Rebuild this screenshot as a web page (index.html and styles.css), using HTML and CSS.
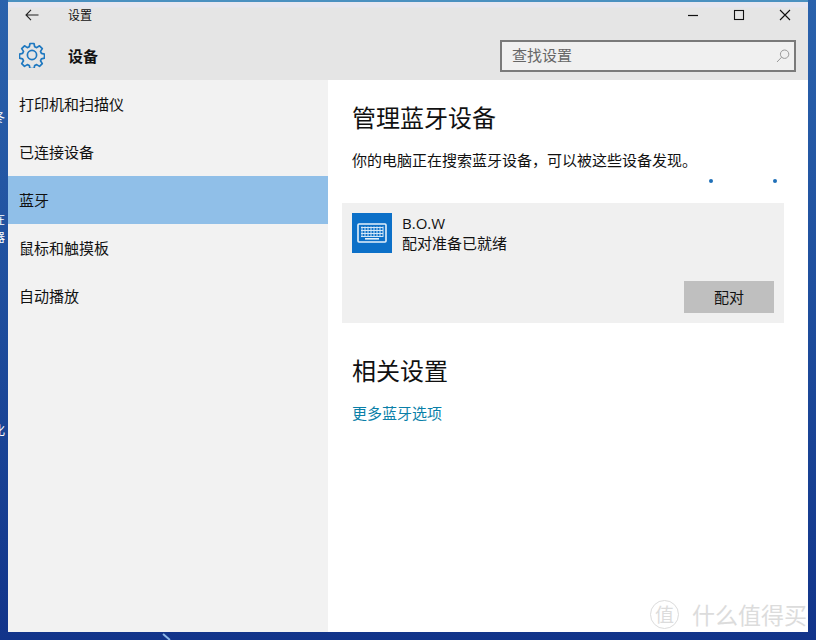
FILE: index.html
```html
<!DOCTYPE html>
<html lang="zh-CN">
<head>
    <meta charset="UTF-8">
    <meta name="viewport" content="width=device-width, initial-scale=1.0">
    <title>设置</title>
    <link rel="stylesheet" href="styles.css">
</head>
<body>

<div class="desktop">
    <span class="desk-char char-1">冬</span>
    <span class="desk-char char-2">在</span>
    <span class="desk-char char-3">器</span>
    <span class="desk-char char-4">化</span>
    <span class="streak"></span>

    <div class="window">
        <div class="titlebar">
            <div class="title-left">
                <svg class="back-icon" width="14" height="12" viewBox="0 0 14 12"><path d="M6 .8 1 6l5 5.2M1 6h12.5" fill="none" stroke="#222" stroke-width="1.1"/></svg>
                <span class="title-text">设置</span>
            </div>
            <div class="window-buttons">
                <svg width="12" height="12" viewBox="0 0 12 12"><path d="M1 6.5h10" stroke="#111" stroke-width="1.2"/></svg>
                <svg width="12" height="12" viewBox="0 0 12 12"><rect x="1.5" y="1.5" width="9" height="9" fill="none" stroke="#111" stroke-width="1.1"/></svg>
                <svg width="12" height="12" viewBox="0 0 12 12"><path d="M1 1l10 10M11 1 1 11" stroke="#111" stroke-width="1.1"/></svg>
            </div>
        </div>

        <div class="header">
            <div class="header-left">
                <svg class="gear-icon" width="26" height="26" viewBox="0 0 26 26">
                    <path d="M11 1.5h4l.7 3.2 2 .9 2.8-1.8 2.8 2.8-1.8 2.8.9 2 3.1.7v4l-3.1.7-.9 2 1.8 2.8-2.8 2.8-2.8-1.8-2 .9-.7 3.2h-4l-.7-3.2-2-.9-2.8 1.8-2.8-2.8 1.8-2.8-.9-2-3.1-.7v-4l3.1-.7.9-2-1.8-2.8 2.8-2.8 2.8 1.8 2-.9z" fill="none" stroke="#1e78c0" stroke-width="1.7" stroke-linejoin="round"/>
                    <circle cx="13" cy="13" r="4.6" fill="none" stroke="#1e78c0" stroke-width="1.7"/>
                </svg>
                <span class="header-title">设备</span>
            </div>
            <div class="search-box">
                <span class="search-text">查找设置</span>
                <svg width="14" height="14" viewBox="0 0 14 14"><circle cx="8.6" cy="5.2" r="4.2" fill="none" stroke="#999"/><path d="M5.6 8.2 1 13" stroke="#999"/></svg>
            </div>
        </div>

        <div class="main">
            <div class="sidebar">
                <div class="nav-item">打印机和扫描仪</div>
                <div class="nav-item">已连接设备</div>
                <div class="nav-item active">蓝牙</div>
                <div class="nav-item">鼠标和触摸板</div>
                <div class="nav-item">自动播放</div>
            </div>

            <div class="content">
                <h2 class="heading">管理蓝牙设备</h2>
                <p class="status">你的电脑正在搜索蓝牙设备，可以被这些设备发现。</p>
                <span class="dot dot-1"></span>
                <span class="dot dot-2"></span>

                <div class="device-card">
                    <div class="device-row">
                        <div class="device-icon">
                            <svg width="30" height="20" viewBox="0 0 30 20">
                                <rect x="1" y="1" width="28" height="18" rx="1" fill="none" stroke="#e4f1fb" stroke-width="1.6"/>
                                <path d="M4 4.5h22M4 7.5h22M4 10.5h22M4 13.5h22M5 3.5v10.5M8 3.5v10.5M11 3.5v10.5M14 3.5v10.5M17 3.5v10.5M20 3.5v10.5M23 3.5v10.5M26 3.5v10.5" stroke="#d3e7f7" stroke-width="1"/>
                                <path d="M8 15.8h14" stroke="#e4f1fb" stroke-width="1.6"/>
                            </svg>
                        </div>
                        <div class="device-info">
                            <div class="device-name">B.O.W</div>
                            <div class="device-state">配对准备已就绪</div>
                        </div>
                    </div>
                    <div class="device-actions">
                        <button class="pair-btn">配对</button>
                    </div>
                </div>

                <h2 class="heading related">相关设置</h2>
                <a class="more-link">更多蓝牙选项</a>
            </div>
        </div>
    </div>

    <div class="watermark">
        <span class="wm-logo">值</span>
        <span class="wm-text">什么值得买</span>
    </div>
</div>

</body>
</html>
```

FILE: styles.css
```css
* {
    box-sizing: border-box;
}
html, body {
    margin: 0;
    height: 640px;
    overflow: hidden;
}
body {
    font-family: "Noto Sans CJK SC", "Noto Sans", sans-serif;
    color: #111;
}
.desktop {
    position: relative;
    height: 640px;
    padding: 0 8px 8px 8px;
    background: linear-gradient(180deg, #2a62ac 0%, #1f4f9e 45%, #12348a 100%);
}
.desk-char {
    position: absolute;
    left: -7px;
    font-size: 12px;
    line-height: 14px;
    color: #fff;
}
.char-1 { top: 110px; }
.char-2 { top: 212px; }
.char-3 { top: 230px; }
.char-4 { top: 423px; }
.streak {
    position: absolute;
    left: 162px;
    top: 636px;
    width: 9px;
    height: 2px;
    background: #8db8e8;
    transform: rotate(40deg);
}
.window {
    height: 632px;
    background: #fff;
    display: flex;
    flex-direction: column;
    border-top: 2px solid #4a90c0;
}
.titlebar {
    height: 30px;
    padding-bottom: 5px;
    display: flex;
    justify-content: space-between;
    align-items: center;
    background: linear-gradient(180deg, #e6e6f0 0, #e6e6f0 5px, #e5e5e5 6px);
}
.title-left {
    display: flex;
    align-items: center;
}
.back-icon {
    margin-left: 17px;
}
.title-text {
    margin-left: 29px;
    font-size: 12px;
}
.window-buttons {
    display: flex;
    gap: 34px;
    margin-right: 17px;
}
.header {
    height: 48px;
    display: flex;
    justify-content: space-between;
    align-items: flex-start;
    background: #e5e5e5;
}
.header-left {
    display: flex;
    align-items: center;
    height: 40px;
    padding-top: 6px;
}
.gear-icon {
    margin-left: 11px;
}
.header-title {
    margin-left: 23px;
    font-size: 15px;
    font-weight: 700;
}
.search-box {
    width: 296px;
    height: 32px;
    margin: 8px 12px 0 0;
    padding: 0 4px 0 10px;
    display: flex;
    justify-content: space-between;
    align-items: center;
    background: #f0f0f0;
    border: 2px solid #7a7a7a;
}
.search-text {
    padding-bottom: 4px;
    font-size: 15px;
    color: #666;
}
.main {
    flex: 1;
    display: flex;
}
.sidebar {
    width: 320px;
    background: #f2f2f2;
}
.nav-item {
    height: 48px;
    line-height: 48px;
    padding-left: 11px;
    font-size: 15px;
}
.nav-item.active {
    background: #90bfe8;
}
.content {
    position: relative;
    flex: 1;
    padding: 0 24px 0 14px;
}
.heading {
    margin: 0 0 0 10px;
    font-size: 24px;
    font-weight: 400;
    line-height: 36px;
    padding-top: 19px;
    height: 56px;
}
.status {
    margin: 16px 0 0 10px;
    font-size: 15px;
    line-height: 16px;
}
.dot {
    position: absolute;
    top: 99px;
    width: 4px;
    height: 4px;
    border-radius: 50%;
    background: #1f70b8;
}
.dot-1 { left: 381px; }
.dot-2 { left: 445px; }
.device-card {
    margin-top: 35px;
    height: 120px;
    padding: 10px;
    display: flex;
    flex-direction: column;
    justify-content: space-between;
    background: #f0f0f0;
}
.device-row {
    display: flex;
}
.device-icon {
    width: 40px;
    height: 40px;
    display: flex;
    align-items: center;
    justify-content: center;
    background: #0c70c8;
}
.device-info {
    margin-left: 10px;
}
.device-name {
    font-family: "Open Sans", sans-serif;
    font-size: 15px;
    line-height: 20px;
}
.device-state {
    font-size: 15px;
    line-height: 19px;
}
.device-actions {
    display: flex;
    justify-content: flex-end;
}
.pair-btn {
    width: 90px;
    height: 32px;
    border: none;
    background: #bfbfbf;
    color: #111;
    font-family: inherit;
    font-size: 15px;
    padding: 0 0 2px 0;
}
.related {
    margin-top: 13px;
    padding-top: 16px;
}
.more-link {
    display: block;
    margin: 11px 0 0 10px;
    font-size: 15px;
    line-height: 20px;
    color: #0a7fa8;
}
.watermark {
    position: absolute;
    left: 650px;
    top: 600px;
    display: flex;
    align-items: center;
    gap: 13px;
    color: #dcdcdc;
}
.wm-logo {
    width: 29px;
    height: 29px;
    border: 1px solid #dcdcdc;
    border-radius: 50%;
    font-size: 19px;
    line-height: 26px;
    text-align: center;
}
.wm-text {
    font-size: 23px;
    line-height: 29px;
}
```
